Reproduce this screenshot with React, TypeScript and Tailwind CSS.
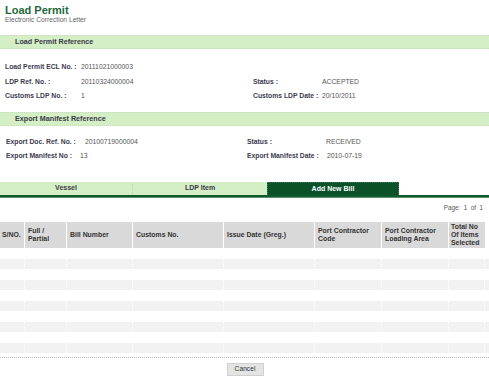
import React from "react";

const cols = "grid grid-cols-[25px_42px_66px_91px_91px_67px_67px_36px_4px]";

function Bar({ title }: { title: string }) {
  return (
    <div className="h-[14px] bg-[#d4eec6] border-y border-dotted border-[#c9dcc0] flex items-center pl-[15px] text-[7.2px] font-bold text-[#3a3a48]">
      {title}
    </div>
  );
}

export default function App() {
  const rows = Array.from({ length: 10 }, (_, i) => i);
  return (
    <div className="w-[489px] h-[378px] bg-white overflow-hidden font-['Liberation_Sans',Arial,sans-serif] text-[#555]">
      <div className="pl-[5px] pt-[4px]">
        <div className="text-[11px] leading-[12px] font-bold text-[#1d6a3a]">Load Permit</div>
        <div className="text-[6.7px] leading-[7px] text-[#666]">Electronic Correction Letter</div>
      </div>

      <div className="mt-[12px]">
        <Bar title="Load Permit Reference" />
      </div>

      <div className="mt-[11px] text-[6.8px]">
        <div className="h-[15px] flex items-center pl-[5px]">
          <span className="w-[76px] font-bold text-[#3b3b50]">Load Permit ECL No. :</span>
          <span>20111021000003</span>
        </div>
        <div className="h-[14px] flex items-center pl-[5px]">
          <div className="w-[248px] flex">
            <span className="w-[76px] font-bold text-[#3b3b50]">LDP Ref. No. :</span>
            <span>20110324000004</span>
          </div>
          <span className="w-[69px] font-bold text-[#3b3b50]">Status :</span>
          <span>ACCEPTED</span>
        </div>
        <div className="h-[14px] flex items-center pl-[5px]">
          <div className="w-[248px] flex">
            <span className="w-[76px] font-bold text-[#3b3b50]">Customs LDP No. :</span>
            <span>1</span>
          </div>
          <span className="w-[69px] font-bold text-[#3b3b50]">Customs LDP Date :</span>
          <span>20/10/2011</span>
        </div>
      </div>

      <div className="mt-[9px]">
        <Bar title="Export Manifest Reference" />
      </div>

      <div className="mt-[9px] text-[6.8px]">
        <div className="h-[14px] flex items-center pl-[6px]">
          <div className="w-[241px] flex">
            <span className="font-bold text-[#3b3b50]">Export Doc. Ref. No. :</span>
            <span className="ml-[9px]">20100719000004</span>
          </div>
          <span className="w-[79px] font-bold text-[#3b3b50]">Status :</span>
          <span>RECEIVED</span>
        </div>
        <div className="h-[15px] flex items-center pl-[6px]">
          <div className="w-[241px] flex">
            <span className="font-bold text-[#3b3b50]">Export Manifest No :</span>
            <span className="ml-[8px]">13</span>
          </div>
          <span className="w-[80px] font-bold text-[#3b3b50]">Export Manifest Date :</span>
          <span>2010-07-19</span>
        </div>
      </div>

      <div className="mt-[18px]">
        <div className="flex h-[13px] text-[7px] font-bold">
          <div className="w-[133px] bg-[#d4eec6] border-r border-dotted border-[#b9d3ad] flex items-center justify-center text-[#3a3a48]">Vessel</div>
          <div className="w-[134px] bg-[#d4eec6] flex items-center justify-center text-[#3a3a48]">LDP Item</div>
          <div className="w-[132px] bg-[#0b5229] border-x border-t border-dotted border-[#3f7a55] flex items-center justify-center text-white">Add New Bill</div>
        </div>
        <div className="h-[3px] bg-[#0d5a2c] border-b border-[#5d8f6c]" />
      </div>

      <div className="mt-[5px] h-[10px] flex items-center justify-end pr-[6px] text-[6.3px] text-[#555]">
        Page:&nbsp; 1&nbsp; of&nbsp; 1
      </div>

      <div className="mt-[9px]">
        <div className={`${cols} h-[26px] text-[6.9px] leading-[8px] font-bold text-[#333]`}>
          <div className="bg-[#d9d9d9] border-r border-white flex items-center pl-[2px]">S/NO.</div>
          <div className="bg-[#d9d9d9] border-r border-white flex items-center pl-[3px]">Full /<br />Partial</div>
          <div className="bg-[#d9d9d9] border-r border-white flex items-center pl-[3px]">Bill Number</div>
          <div className="bg-[#d9d9d9] border-r border-white flex items-center pl-[3px]">Customs No.</div>
          <div className="bg-[#d9d9d9] border-r border-white flex items-center pl-[3px]">Issue Date (Greg.)</div>
          <div className="bg-[#d9d9d9] border-r border-white flex items-center pl-[3px]">Port Contractor<br />Code</div>
          <div className="bg-[#d9d9d9] border-r border-white flex items-center pl-[3px]">Port Contractor<br />Loading Area</div>
          <div className="bg-[#d9d9d9] flex items-center pl-[2px]">Total No<br />Of Items<br />Selected</div>
          <div />
        </div>
        {rows.map((i) => {
          const shaded = i % 2 === 1;
          return (
            <div key={i} className={`${cols} ${shaded ? "h-[10px]" : "h-[11px]"}`}>
              {Array.from({ length: 9 }, (_, c) => (
                <div
                  key={c}
                  className={`${shaded ? "bg-[#f2f2f2]" : "bg-white"} ${c < 8 ? "border-r border-dotted border-white" : ""}`}
                />
              ))}
            </div>
          );
        })}
      </div>

      <div className="mt-[4px] border-t border-dotted border-[#b8b8b8]" />

      <div className="mt-[5px] flex justify-center pl-[1px]">
        <button className="w-[37px] h-[13px] bg-[#e4e4e4] border border-[#d0d0d0] text-[6.7px] text-[#333] flex items-center justify-center">
          Cancel
        </button>
      </div>
    </div>
  );
}
